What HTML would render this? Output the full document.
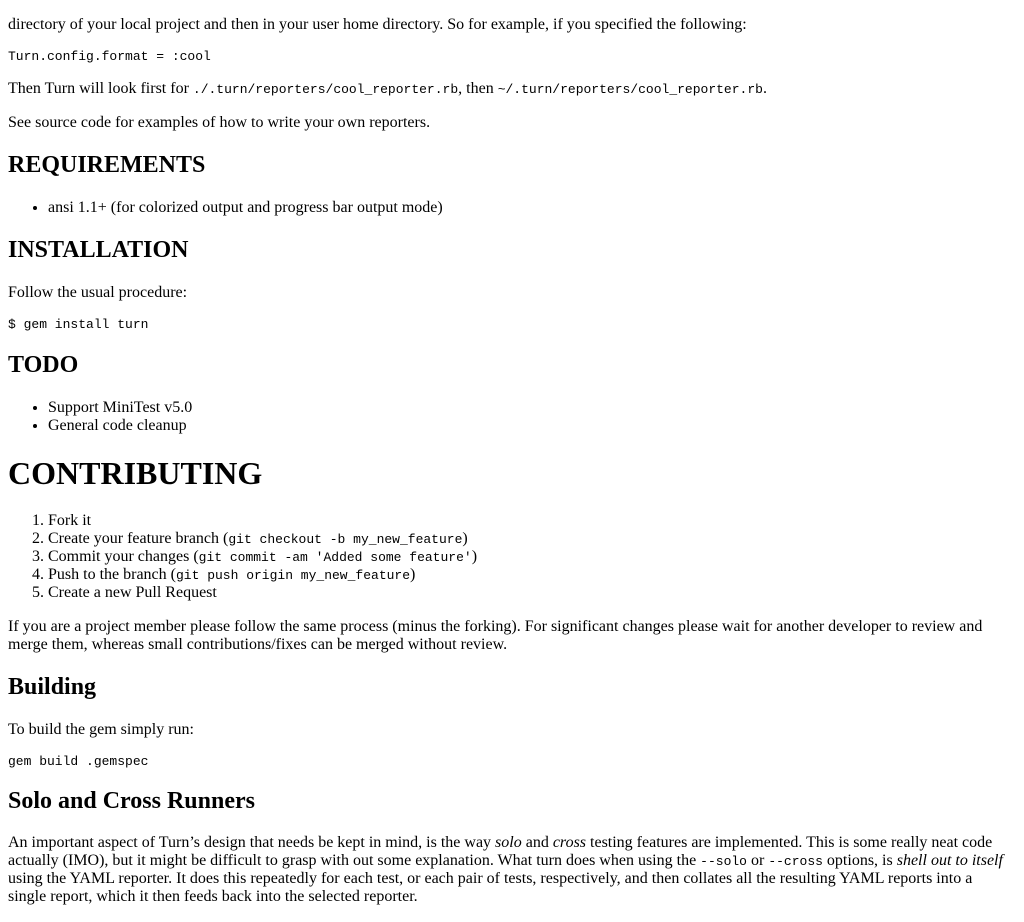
<!DOCTYPE html>
<html><head><meta charset="utf-8"><style>
body{margin:8px;font-family:"Liberation Serif",serif;font-size:16px;color:#000;background:#fff;max-width:1000px}
code,pre{font-family:"Liberation Mono",monospace;font-size:13px}
pre{margin:13px 0;line-height:14px}
h1{font-size:32px;margin:20px 0}
h2{font-size:24px;margin:20px 0}
h3{font-size:24px;margin:19px 0}
ul,ol{padding-left:40px}
</style></head><body>
<p>directory of your local project and then in your user home directory. So for example, if you specified the following:</p>
<pre><code>Turn.config.format = :cool</code></pre>
<p>Then Turn will look first for <code>./.turn/reporters/cool_reporter.rb</code>, then <code>~/.turn/reporters/cool_reporter.rb</code>.</p>
<p>See source code for examples of how to write your own reporters.</p>
<h2>REQUIREMENTS</h2>
<ul><li>ansi 1.1+ (for colorized output and progress bar output mode)</li></ul>
<h2>INSTALLATION</h2>
<p>Follow the usual procedure:</p>
<pre><code>$ gem install turn</code></pre>
<h2>TODO</h2>
<ul><li>Support MiniTest v5.0</li><li>General code cleanup</li></ul>
<h1>CONTRIBUTING</h1>
<ol>
<li>Fork it</li>
<li>Create your feature branch (<code>git checkout -b my_new_feature</code>)</li>
<li>Commit your changes (<code>git commit -am 'Added some feature'</code>)</li>
<li>Push to the branch (<code>git push origin my_new_feature</code>)</li>
<li>Create a new Pull Request</li>
</ol>
<p>If you are a project member please follow the same process (minus the forking). For significant changes please wait for another developer to review and merge them, whereas small contributions/fixes can be merged without review.</p>
<h2>Building</h2>
<p>To build the gem simply run:</p>
<pre><code>gem build .gemspec</code></pre>
<h3>Solo and Cross Runners</h3>
<p>An important aspect of Turn’s design that needs be kept in mind, is the way <em>solo</em> and <em>cross</em> testing features are implemented. This is some really neat code actually (IMO), but it might be difficult to grasp with out some explanation. What turn does when using the <code>--solo</code> or <code>--cross</code> options, is <em>shell out to itself</em> using the YAML reporter. It does this repeatedly for each test, or each pair of tests, respectively, and then collates all the resulting YAML reports into a single report, which it then feeds back into the selected reporter.</p>
</body></html>
